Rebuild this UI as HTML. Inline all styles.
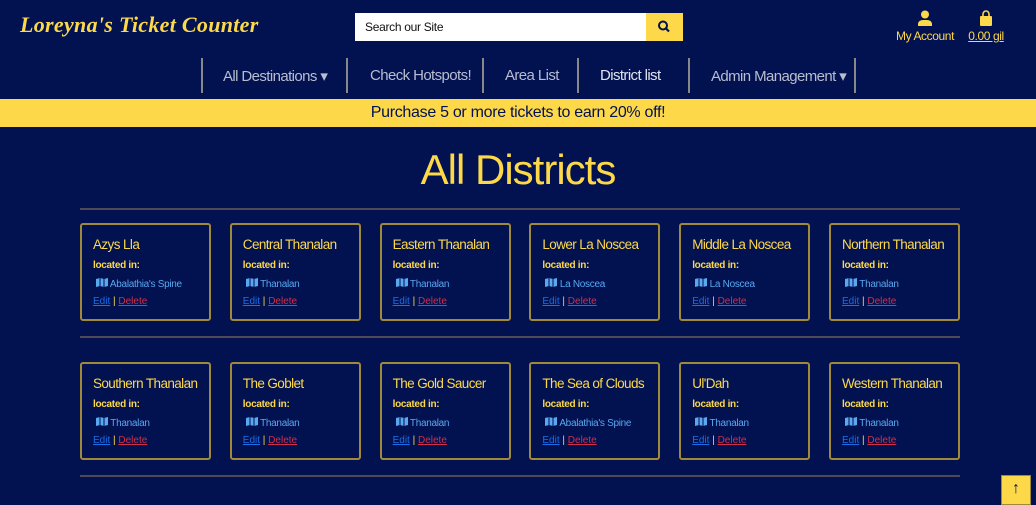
<!DOCTYPE html>
<html><head><style>
*{box-sizing:border-box;margin:0;padding:0}
body{width:1036px;height:498px;overflow:hidden;background:#021150;font-family:"Liberation Sans",sans-serif;position:relative}
.abs{position:absolute}
.logo{left:20px;top:12px;color:#fdd94a;font:italic bold 22px "Liberation Serif",serif;letter-spacing:0.3px}
.search{left:355px;top:13px;width:291px;height:28px;background:#fff;font-size:12px;padding:7px 10px;color:#111;letter-spacing:-0.3px}
.sbtn{left:646px;top:13px;width:37px;height:28px;background:#fdd94a}
.acct{color:#fdd94a;font-size:12px;text-align:center;white-space:nowrap;letter-spacing:-0.4px}
.nav{top:58px;height:35px;border-left:2px solid #888;}
.navt{top:67px;color:#b8bdd0;font-size:15px;letter-spacing:-0.6px;white-space:nowrap}
.banner{left:0;top:99px;width:1036px;height:28px;background:#fdd94a;text-align:center;font-size:16px;line-height:28px;color:#021150;letter-spacing:-0.3px}
h1{position:absolute;top:146px;width:100%;text-align:center;color:#fdd94a;font-weight:normal;font-size:42px;letter-spacing:-1px}
.sep{left:80px;width:880px;height:2px;background:#4d4a55}
.card{position:absolute;width:131px;height:98px;border:2px solid #a08a3a;border-radius:3px;padding:12px 11px;color:#fdd94a}
.card b{display:block;font-weight:normal;font-size:13.5px;white-space:nowrap;letter-spacing:-0.6px}
.card .l{font-size:10px;margin-top:8px;font-weight:bold;letter-spacing:-0.3px}
.card .p{font-size:10px;color:#5aa8f0;margin-top:7px;padding-left:3px;letter-spacing:-0.3px}
.card .e{font-size:10px;margin-top:6px}
.e a{text-decoration:underline}
.blue{color:#1a6ee8}.red{color:#d0304a}
</style></head><body>
<div class="abs logo">Loreyna's Ticket Counter</div>
<div class="abs search">Search our Site</div>
<div class="abs sbtn"><svg width="37" height="28"><circle cx="17" cy="12.5" r="4" stroke="#021150" stroke-width="2" fill="none"/><line x1="20" y1="15.5" x2="23" y2="18.5" stroke="#021150" stroke-width="2.2"/></svg></div>
<div class="abs acct" style="left:890px;top:10px;width:70px"><svg width="16" height="16"><circle cx="8" cy="4.5" r="4" fill="#fdd94a"/><path d="M1 16v-2a5 4 0 0 1 5-4h4a5 4 0 0 1 5 4v2z" fill="#fdd94a"/></svg><div>My Account</div></div>
<div class="abs acct" style="left:963px;top:10px;width:46px"><svg width="16" height="16"><path d="M5 6V4a3 3 0 0 1 6 0v2" stroke="#fdd94a" stroke-width="1.6" fill="none"/><rect x="2" y="6" width="12" height="10" rx="1" fill="#fdd94a"/></svg><div style="text-decoration:underline">0.00 gil</div></div>
<div class="abs nav" style="left:201px"></div><div class="abs nav" style="left:346px"></div><div class="abs nav" style="left:482px"></div><div class="abs nav" style="left:577px"></div><div class="abs nav" style="left:688px"></div><div class="abs nav" style="left:854px"></div>
<div class="abs navt" style="left:223px">All Destinations ▾</div>
<div class="abs navt" style="left:370px">Check Hotspots!</div>
<div class="abs navt" style="left:505px">Area List</div>
<div class="abs navt" style="left:600px;color:#e0e3ee">District list</div>
<div class="abs navt" style="left:711px">Admin Management ▾</div>
<div class="abs banner">Purchase 5 or more tickets to earn 20% off!</div>
<h1>All Districts</h1>
<div class="abs sep" style="top:208px"></div>
<div class="abs sep" style="top:336px"></div>
<div class="abs sep" style="top:475px"></div>
<div id="cards"></div>
<div class="abs" style="left:1001px;top:475px;width:30px;height:30px;background:#fdd94a;border:1px solid #a08a3a;text-align:center;font-size:16px;font-weight:bold;color:#021150;padding-top:4px">↑</div>
<script>
var d=[["Azys Lla","Abalathia's Spine"],["Central Thanalan","Thanalan"],["Eastern Thanalan","Thanalan"],["Lower La Noscea","La Noscea"],["Middle La Noscea","La Noscea"],["Northern Thanalan","Thanalan"],["Southern Thanalan","Thanalan"],["The Goblet","Thanalan"],["The Gold Saucer","Thanalan"],["The Sea of Clouds","Abalathia's Spine"],["Ul'Dah","Thanalan"],["Western Thanalan","Thanalan"]];
var h="";d.forEach(function(c,i){var x=80+(i%6)*149.8,y=i<6?223:362;
h+='<div class="card" style="left:'+x+'px;top:'+y+'px"><b>'+c[0]+'</b><div class="l">located in:</div><div class="p"><svg width="12" height="9"><path d="M0 1l4-1 4 1 4-1v8l-4 1-4-1-4 1z" fill="#5aa8f0"/><path d="M4 0v8M8 1v8" stroke="#021150"/></svg> '+c[1]+'</div><div class="e"><a class="blue">Edit</a> | <a class="red">Delete</a></div></div>';});
document.getElementById("cards").innerHTML=h;
</script>
</body></html>
